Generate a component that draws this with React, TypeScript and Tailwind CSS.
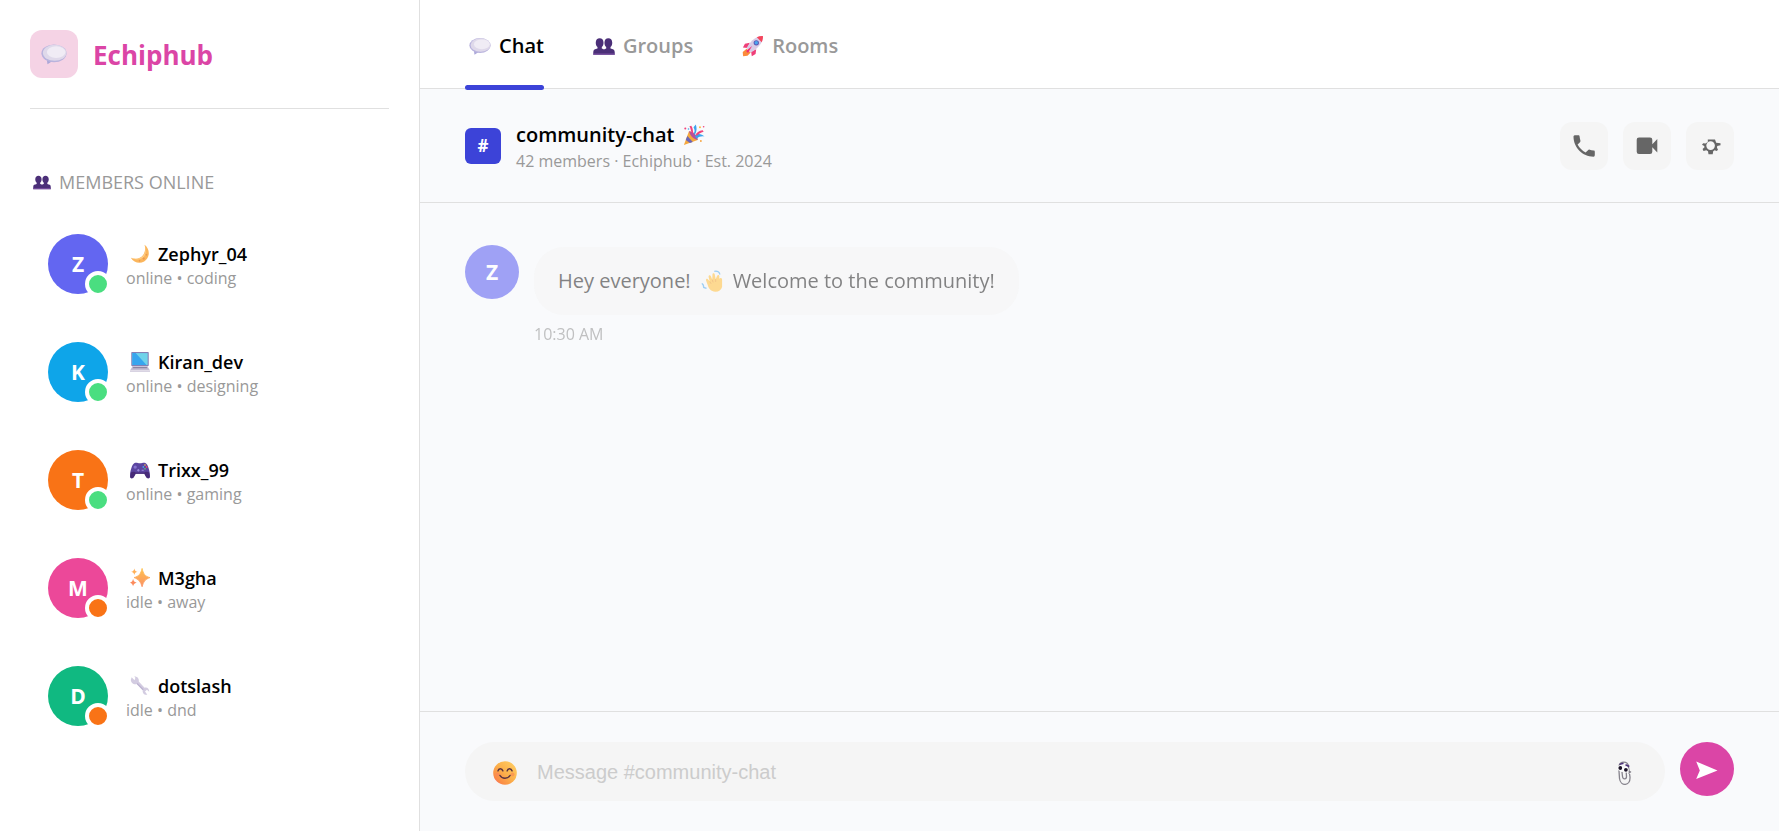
import { useState } from 'react';
import type { ReactNode } from 'react';

type EmojiName = 'bubble' | 'people' | 'rocket' | 'moon' | 'laptop' | 'gamepad' | 'sparkles' | 'wrench' | 'party' | 'wave' | 'smile' | 'clip';

// All drawn on a 24x24 grid
const emojis: Record<EmojiName, ReactNode> = {
    bubble: (
        <>
            <path d="M5 14 L6 21.500 L12 17.500 Z" fill="#a9a5d8" />
            <ellipse cx="12" cy="11.400" rx="11.600" ry="8.200" fill="#b9b3dd" />
            <ellipse cx="12.600" cy="10.900" rx="10.900" ry="7.400" fill="#dfd9ea" />
            <ellipse cx="14" cy="10.200" rx="8.600" ry="5.400" fill="#f0ecf5" />
        </>
    ),
    people: (
        <>
            <path d="M.3 21.500v-3c0-2.600 2-3 4.600-3.700V13C3.600 12 3 10.400 3 8.400 3 5 4.800 3.500 7.300 3.500c2.400 0 4.200 1.500 4.200 4.900 0 2-.6 3.600-1.900 4.600v1.800c1 .3 1.800.5 2.400.9.600-.4 1.400-.6 2.400-.9V13c-1.300-1-1.900-2.600-1.900-4.600 0-3.400 1.800-4.900 4.200-4.900 2.500 0 4.300 1.500 4.300 4.900 0 2-.6 3.600-1.900 4.600v1.800c2.600.7 4.600 1.100 4.600 3.700v3z" fill="#4b2f78" />
            <path d="M.3 21.500h23.400v-1.300H.3z" fill="#7a4fa0" />
        </>
    ),
    rocket: (
        <>
            <path d="M5 15 L.8 18.500 L1.200 23.300 L6 22.500 L9.500 19 Z" fill="#fb8b3c" />
            <path d="M8.500 8.500 L3.200 9.600 L1 13.700 L6 14.200 Z M15.500 15.500 L14.800 20.600 L10.700 23.200 L9.900 18 Z" fill="#ef3f78" />
            <path d="M22.800 1.200 C17 1 10.500 4.500 5 14.200 L9.800 19 C19.500 13.500 23.200 7 22.800 1.200Z" fill="#d9cbe6" />
            <path d="M22.800 1.200 C20.500 1 18.200 1.500 16.200 2.500 L21.500 7.800 C22.500 5.800 23 3.500 22.800 1.200Z" fill="#f5455c" />
            <path d="M11 12 L4.500 17.500 L6.500 19.500 Z" fill="#f02c75" />
            <circle cx="15.600" cy="8.500" r="2.900" fill="#5b57b5" />
            <circle cx="15.600" cy="8.500" r="1.900" fill="#4ba6ee" />
        </>
    ),
    moon: (
        <>
            <path d="M17.500 1 C25 7 23.500 17 17 21 C11.500 24.300 4.500 22.300 1 16.600 C7 18.700 12.500 17.500 15.500 13.500 C18.200 10 18.800 5.500 17.500 1Z" fill="#fbb65c" />
            <path d="M17.500 1 C19.300 6 18.700 10.800 15.500 14.500 C12 18.500 6.500 18.800 1 16.600 C6.500 19.500 13 19 16.500 15.200 C19.500 12 19.800 5.500 17.500 1Z" fill="#ffd08a" />
            <circle cx="16.500" cy="17.500" r="1.300" fill="#ea9850" />
            <circle cx="19.800" cy="13" r="1" fill="#ea9850" />
            <circle cx="11.500" cy="20.200" r="1" fill="#ea9850" />
        </>
    ),
    laptop: (
        <>
            <rect x="1.500" y="0" width="21" height="17" rx="1" fill="#8580b4" />
            <path d="M2.800 1.300h18.400v14.300H2.800z" fill="#6fd3ea" />
            <path d="M2.800 1.300h4l13 14.300H2.800z" fill="#36a5ee" />
            <path d="M3 17h18l2.800 5H.2z" fill="#c3bdd2" />
            <path d="M4 18h16l1 1.600H3z" fill="#8c85a3" />
            <path d="M0 22h24v2H0z" fill="#d8d3e2" />
        </>
    ),
    gamepad: (
        <>
            <path d="M5.500 3.500 C8 2.600 9.500 4 12 4 S16 2.600 18.500 3.500 C22 5 24.500 16 23.800 20 C23.300 22.500 20.500 22.300 19.200 20 L17.200 16.500 H6.800 L4.800 20 C3.500 22.300 .7 22.500 .2 20 C-.5 16 2 5 5.500 3.500Z" fill="#5b45a0" />
            <path d="M1 15 C4 13 6 15 7.500 15 H16.500 C18 15 20 13 23 15 L23.800 20 C23.300 22.500 20.500 22.300 19.200 20 L17.200 16.500 H6.800 L4.800 20 C3.500 22.300 .7 22.500 .2 20Z" fill="#472b78" />
            <circle cx="6.200" cy="8.500" r="2" fill="#8674cf" />
            <path d="M8.500 12.300h3M10 10.800v3M14 12.300h2.500" stroke="#9d8ce0" strokeWidth="1.200" />
            <circle cx="18" cy="6" r="1" fill="#ffc94b" />
            <circle cx="20" cy="8.300" r="1" fill="#f0486c" />
            <circle cx="16" cy="8.300" r="1" fill="#48a9ee" />
            <circle cx="18" cy="10.600" r="1" fill="#52cf72" />
        </>
    ),
    sparkles: (
        <>
            <defs>
                <linearGradient id="spark" x1="0" y1="0" x2="0" y2="1">
                    <stop offset="0" stopColor="#ffc24e" />
                    <stop offset="1" stopColor="#fb9165" />
                </linearGradient>
            </defs>
            <path d="M14.500 .5 C16 7 18 10 24 11.500 C18 13.600 16.300 16.500 14.500 22.500 C12.700 16.500 10.500 13.600 4.800 11.500 C10.500 10 13 7 14.500 .5Z" fill="url(#spark)" stroke="url(#spark)" />
            <path d="M5.200 .5 C5.700 3 6.600 4 9 4.500 C6.600 5 5.700 6 5.200 8.400 C4.700 6 3.800 5 1.400 4.500 C3.800 4 4.700 3 5.200 .5Z" fill="#ffb057" />
            <path d="M3.700 13 C4.300 16 5.200 17 8 17.600 C5.200 18.200 4.300 19.200 3.700 22 C3.100 19.200 2.200 18.200 0 17.600 C2.200 17 3.100 16 3.700 13Z" fill="#fc8b5c" />
        </>
    ),
    wrench: (
        <>
            <path d="M2 1.500 L5.500 5 L6.500 2 L5 .7 C8.500 .2 11.300 3 10.500 6.500 L17.500 14 C20.500 13 23.500 15.500 23 19 L20.300 16.600 L18 18.500 L20.800 22.500 C17.500 23.300 14.500 20.500 15.300 17 L8 9.700 C4.500 11 1 8 1 4.500Z" fill="#d3cce1" />
            <path d="M8 9.700 L15.300 17 L16.500 16 L9 8.500Z" fill="#bdb4d1" />
        </>
    ),
    party: (
        <>
            <path d="M6.500 8 L1 23 L16 17.500 C15 12.500 11 8.700 6.500 8Z" fill="#f5a83e" />
            <path d="M4.700 13 L10.700 19.500 L7.500 20.700 L3 17.500Z" fill="#6a65b8" />
            <path d="M6.500 8 C8 13 11 16.500 16 17.500 C16 12.500 11 8 6.500 8Z" fill="#b5529c" />
            <path d="M9.500 9.500 C8 6.500 8.500 4.500 7 2.500 L9 2 C11 4.500 10.500 7.500 11.500 11Z" fill="#f0437c" />
            <path d="M11.500 10.500 C13.500 8 12.500 5.500 11.500 3.500 L14 .5 C15 4 15.500 7.500 13 11.500Z" fill="#3aa3ee" />
            <path d="M13 13 C16 9.500 20 10.500 23.500 13.500 C20 13 17.500 13.500 15 16Z" fill="#3aa3ee" />
            <path d="M14 11 C16 9 17 7.500 21.500 6.800 L22.500 8.500 C19 9.500 17 11 15 13Z" fill="#f0437c" />
            <circle cx="2.500" cy="5" r="1.100" fill="#f0437c" />
            <circle cx="18.500" cy="3.500" r="1" fill="#ffb32e" />
            <circle cx="6" cy="5.500" r=".9" fill="#42a8ee" />
            <circle cx="19.500" cy="18.500" r="1" fill="#f7a33c" />
            <circle cx="22.500" cy="3" r=".9" fill="#f0437c" />
        </>
    ),
    wave: (
        <>
            <path d="M5.500 11.500 C5 9.500 7 9 8 10.500 L9.500 12.500 L8.300 7.500 C8 5.500 10 5 10.800 6.800 L12.300 10.500 L12.500 5 C12.600 3.200 14.700 3.200 15 5 L16 10 L17.500 6.500 C18.300 4.900 20.300 5.500 20 7.300 L19.800 9.500 C21 8 23 8.500 23 10.500 V18.500 C22 22 19 24 15.500 23.800 C11 23.500 8.500 20.500 7.500 17Z" fill="#ffc34a" />
            <path d="M9.500 12.500 L11 15 M12.300 10.500 L13.200 13.500 M16 10 L16 13" stroke="#e99a3a" strokeWidth=".9" />
            <path d="M14.500 1.500 C18 .5 20.500 2.500 20.500 5 M1 14.500 L2.500 16.500 L3 19 L6 20" stroke="#5fb1ee" strokeWidth="1.500" fill="none" />
        </>
    ),
    smile: (
        <>
            <defs>
                <linearGradient id="face" x1="1" y1="0" x2="0" y2="1">
                    <stop offset="0" stopColor="#ffd166" />
                    <stop offset=".5" stopColor="#fbb04b" />
                    <stop offset=".8" stopColor="#fb8a45" />
                    <stop offset="1" stopColor="#f2549c" />
                </linearGradient>
            </defs>
            <circle cx="12" cy="12" r="11.800" fill="url(#face)" />
            <circle cx="4.500" cy="13.500" r="2" fill="#fb8b52" />
            <circle cx="19.500" cy="13.500" r="2" fill="#fb9a52" />
            <path d="M5 9.800c.6-2.800 4-2.800 4.800 0M14.200 9.800c.6-2.800 4-2.800 4.800 0M7 14.500c2 3.600 8 3.600 10 0" stroke="#5a3340" strokeWidth="1.500" fill="none" strokeLinecap="round" />
        </>
    ),
    clip: (
        <>
            <path d="M6 10 V6 C6 -.5 15.500 -.5 15.500 6 L17 16 C17.500 25.500 7.500 25.500 6.500 17.500 L6 10 M9 11 L9.500 15.500 C10 19 13.500 18.500 13.500 15.500 L13 8 M15.500 12.500 L18 10.500" stroke="#85828b" strokeWidth="1.300" fill="none" />
            <circle cx="7.300" cy="7" r="2.800" fill="#fff" />
            <circle cx="12.900" cy="8.800" r="2.800" fill="#fff" />
            <circle cx="7.300" cy="7" r="1.900" fill="#1d1528" />
            <circle cx="12.900" cy="8.800" r="1.900" fill="#1d1528" />
            <path d="M6.500 3.400 L10.500 2.200 M12.500 3.800 L16.300 5.500" stroke="#4b2f78" strokeWidth="1.500" />
        </>
    ),
};

function Emoji({ name, className }: { name: EmojiName; className: string }) {
    return (
        <svg viewBox="0 0 24 24" aria-hidden="true" className={`shrink-0 ${className}`}>
            {emojis[name]}
        </svg>
    );
}

interface Member {
    name: string;
    emoji: EmojiName;
    status: string;
    color: string;
    dot: string;
}

const members: Member[] = [
    { name: 'Zephyr_04', emoji: 'moon', status: 'online • coding', color: 'bg-[#6366f1]', dot: 'bg-[#4ade80]' },
    { name: 'Kiran_dev', emoji: 'laptop', status: 'online • designing', color: 'bg-[#0ea5e9]', dot: 'bg-[#4ade80]' },
    { name: 'Trixx_99', emoji: 'gamepad', status: 'online • gaming', color: 'bg-[#f97316]', dot: 'bg-[#4ade80]' },
    { name: 'M3gha', emoji: 'sparkles', status: 'idle • away', color: 'bg-[#ec4899]', dot: 'bg-[#f97316]' },
    { name: 'dotslash', emoji: 'wrench', status: 'idle • dnd', color: 'bg-[#10b981]', dot: 'bg-[#f97316]' },
];

const tabs: { label: string; emoji: EmojiName }[] = [
    { label: 'Chat', emoji: 'bubble' },
    { label: 'Groups', emoji: 'people' },
    { label: 'Rooms', emoji: 'rocket' },
];

function MemberRow({ member }: { member: Member }) {
    return (
        <li className="flex items-center gap-[18px] px-[18px]">
            <div className={`relative flex size-[60px] shrink-0 items-center justify-center rounded-full pt-[2px] text-[21px] font-bold text-white ${member.color}`}>
                {member.name[0].toUpperCase()}
                <span className={`absolute -right-[3px] -bottom-[3px] size-[26px] rounded-full border-4 border-white ${member.dot}`} />
            </div>
            <div className="min-w-0 pt-1">
                <div className="flex items-center gap-2 text-[18px] leading-6 font-semibold text-black">
                    <Emoji name={member.emoji} className="ml-1 size-5" />
                    {member.name}
                </div>
                <div className="text-[16px] leading-6 text-[#999]">{member.status}</div>
            </div>
        </li>
    );
}

function ActionButton({ label, children }: { label: string; children: ReactNode }) {
    return (
        <button aria-label={label} className="flex size-12 items-center justify-center rounded-xl bg-[#f5f5f5] text-[#666]">
            <svg viewBox="0 0 24 24" fill="currentColor" className="size-6">{children}</svg>
        </button>
    );
}

export default function App() {
    const [tab, setTab] = useState('Chat');
    const [message, setMessage] = useState('');

    return (
        <div className="flex h-screen bg-white font-['Open_Sans',sans-serif]">
            {/* Sidebar */}
            <aside className="w-[420px] shrink-0 border-r border-[#e0e0e0] p-[30px]">
                <div className="flex items-center gap-[15px] border-b border-[#e0e0e0] pb-[30px]">
                    <div className="flex size-12 items-center justify-center rounded-xl bg-[#f5d3e5]">
                        <Emoji name="bubble" className="size-[26px]" />
                    </div>
                    <h1 className="pt-[2px] text-[26px] leading-9 font-bold text-[#db45a6]">Echiphub</h1>
                </div>

                <h2 className="mt-[60px] flex items-center gap-2 text-[18px] leading-[26px] font-medium text-[#999]">
                    <Emoji name="people" className="ml-[3px] size-[18px]" />
                    MEMBERS ONLINE
                </h2>

                <ul className="mt-[39px] flex flex-col gap-12">
                    {members.map((m) => <MemberRow key={m.name} member={m} />)}
                </ul>
            </aside>

            <main className="flex min-w-0 flex-1 flex-col bg-[#f9fafc]">
                {/* Tabs */}
                <nav className="flex gap-[45px] border-b border-[#e0e0e0] bg-white px-[45px]">
                    {tabs.map(({ label, emoji }) => (
                        <button
                            key={label}
                            onClick={() => setTab(label)}
                            className={`relative flex h-[88px] items-center gap-2 pt-[3px] text-[20px] font-semibold ${tab === label ? 'text-black' : 'text-[#999]'}`}
                        >
                            <Emoji name={emoji} className="ml-1 size-[22px]" />
                            {label}
                            {tab === label && <span className="absolute inset-x-0 -bottom-[2px] h-[5px] rounded-[3px] bg-[#3c43d8]" />}
                        </button>
                    ))}
                </nav>

                {/* Channel header */}
                <header className="flex items-center border-b border-[#e0e0e0] px-[45px] py-[30px]">
                    <div className="flex size-9 items-center justify-center rounded-md bg-[#3c43d8] text-[17px] font-bold text-white">#</div>
                    <div className="ml-[15px]">
                        <div className="flex items-center gap-2 text-[20px] leading-8 font-semibold text-black">
                            community-chat
                            <Emoji name="party" className="size-[22px]" />
                        </div>
                        <div className="text-[16px] leading-[21px] text-[#999]">42 members · Echiphub · Est. 2024</div>
                    </div>
                    <div className="ml-auto flex gap-[15px]">
                        <ActionButton label="Call">
                            <path d="M4.500 1.200 C3 1 1.500 1.200 1.500 2.500 C1.500 13.500 10.500 22.700 21.500 22.700 C22.700 22.700 22.800 21.500 22.800 20.500 V18 C22.800 17 22.400 16.700 21.700 16.600 C20 16.400 18.800 16.100 17.700 15.700 C17 15.500 16.500 15.700 16 16.200 L13.600 18.600 C10.200 16.800 7.400 14 5.600 10.600 L8 8.200 C8.500 7.700 8.600 7.200 8.400 6.600 C8 5.300 7.700 4 7.600 2.500 C7.500 1.600 7.200 1.200 6.300 1.200Z" />
                        </ActionButton>
                        <ActionButton label="Video call">
                            <path d="M4 3.500h11a2.300 2.300 0 0 1 2.300 2.300v4.400L22.300 5v13.500L17.300 13.300v4.400a2.300 2.300 0 0 1-2.300 2.300H4a2.300 2.300 0 0 1-2.300-2.300V5.800A2.300 2.300 0 0 1 4 3.500Z" />
                        </ActionButton>
                        <ActionButton label="Settings">
                            <path fillRule="evenodd" d="M9.800 5.500 H17 L18.200 8.800 L22.500 9.300 V11.300 L19.200 12 L19 14 L20 15.200 L19 17 L16.600 16.300 L15.200 17.300 L14.700 20.300 H10.500 L10 17.300 L8.300 16.200 L5.500 17 L4.600 15 L6.500 13.300 L6.200 12 L4 10.800 L5.200 9.200 L7.500 9.600 L9.800 8Z M12.600 7.300a4.300 4.300 0 1 0 0 8.600a4.300 4.300 0 1 0 0-8.600Z" />
                        </ActionButton>
                    </div>
                </header>

                {/* Messages */}
                <section className="flex-1 overflow-y-auto px-[45px] pt-[42px]">
                    <article className="flex gap-[15px] opacity-60">
                        <div className="flex size-[54px] shrink-0 items-center justify-center rounded-full bg-[#6366f1] pt-[2px] text-[21px] font-bold text-white">Z</div>
                        <div className="pt-[2px]">
                            <p className="flex items-center gap-[10px] rounded-[30px] bg-[#f5f5f5] px-6 py-[18px] text-[20px] leading-8 text-[#333]">
                                Hey everyone!
                                <Emoji name="wave" className="size-[22px]" />
                                Welcome to the community!
                            </p>
                            <time className="mt-[7px] block text-[16px] leading-6 text-[#999]">10:30 AM</time>
                        </div>
                    </article>
                </section>

                {/* Composer */}
                <form
                    className="flex gap-[15px] border-t border-[#e0e0e0] px-[45px] py-[30px]"
                    onSubmit={(e) => { e.preventDefault(); setMessage(''); }}
                >
                    <div className="flex h-[59px] flex-1 items-center rounded-full bg-[#f5f5f5] px-7">
                        <button type="button" aria-label="Emoji" className="pt-[3px]"><Emoji name="smile" className="size-6" /></button>
                        <input
                            aria-label="Message"
                            value={message}
                            onChange={(e) => setMessage(e.target.value)}
                            placeholder="Message #community-chat"
                            className="mx-5 min-w-0 flex-1 bg-transparent font-['Liberation_Sans',sans-serif] text-[20px] text-black outline-none placeholder:text-[#ccc]"
                        />
                        <button type="button" aria-label="Attach file" className="pt-[3px]"><Emoji name="clip" className="size-6" /></button>
                    </div>
                    <button aria-label="Send" className="flex size-[54px] items-center justify-center rounded-full bg-[#db45a6] text-white">
                        <svg viewBox="0 0 24 24" fill="currentColor" className="size-6"><path d="M1.200 4.500 L22.500 13.500 L1.200 22 L4.800 13.500Z" /></svg>
                    </button>
                </form>
            </main>
        </div>
    );
}
